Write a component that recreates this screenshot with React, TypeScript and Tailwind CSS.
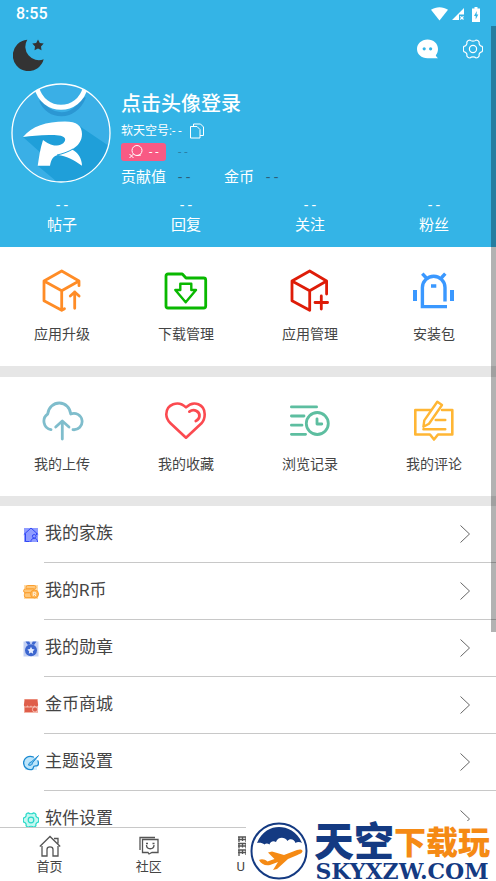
import React from 'react';

interface IconItem {
  label: string;
  icon: React.ReactNode;
}

const Outline: React.FC<{ className: string; children: React.ReactNode }> = ({ className, children }) => (
  <svg
    viewBox="0 0 44 44"
    className={`h-11 w-11 ${className}`}
    fill="none"
    stroke="currentColor"
    strokeWidth={2.8}
    strokeLinecap="round"
    strokeLinejoin="round"
    aria-hidden="true"
  >
    {children}
  </svg>
);

const SmallIcon: React.FC<{ children: React.ReactNode }> = ({ children }) => (
  <svg viewBox="0 0 16 16" className="h-4 w-4" fill="none" aria-hidden="true">
    {children}
  </svg>
);

const gearPath =
  'M7 1C8.200 2.600 11.800 2.600 13 1C14.200 1 15.500 1.800 16.200 3C15.600 5 17 7 19.200 7.400C19.800 9 19.800 11 19.200 12.600C17 13 15.600 15 16.200 17C15.500 18.200 14.200 19 13 19C11.800 17.400 8.200 17.400 7 19C5.800 19 4.500 18.200 3.800 17C4.400 15 3 13 .800 12.600C.200 11 .200 9 .800 7.400C3 7 4.400 5 3.800 3C4.500 1.800 5.800 1 7 1Z';

const tools: IconItem[] = [
  {
    label: '应用升级',
    icon: (
      <Outline className="text-[#ff8c26]">
        <path d="M39 16.7V12L21.7 2 4 12v19.7l17.7 9.6 2.8-1.6M4 12l17.7 9.7L39 12M21.7 21.7v19.6" />
        <path d="M34.7 39.3V23M30.3 27l4.4-4 4.4 4" />
      </Outline>
    ),
  },
  {
    label: '下载管理',
    icon: (
      <Outline className="text-[#09b800]">
        <path d="M4 5h14.3L22 9h17.7a2 2 0 0 1 2 2v26a2 2 0 0 1-2 2H4a2 2 0 0 1-2-2V7a2 2 0 0 1 2-2z" />
        <path d="M16.3 14.7h11V21H32L21.7 33.3 11.3 21h5z" strokeWidth={2.4} />
      </Outline>
    ),
  },
  {
    label: '应用管理',
    icon: (
      <Outline className="text-[#de1c08]">
        <path d="M38.6 25V12L21.7 2 4 12v19.7l17.7 9.6V21.7M4 12l17.7 9.7L38.6 12" />
        <path d="M33.3 27v13M27 33.5h12.6" />
      </Outline>
    ),
  },
  {
    label: '安装包',
    icon: (
      <Outline className="text-[#3a98ff]">
        <path
          d="M33 32.5V18.6a11.3 11.3 0 0 0-22.6 0v19H35M10.3 4.7l3.6 3.8M33.3 4.7l-3.6 3.8"
          strokeWidth={3.4}
          strokeLinecap="butt"
          strokeLinejoin="miter"
        />
        <path d="M1 21h4v11H1zM38 21h4v11h-4zM19 15.3h5.3v3.4H19z" fill="currentColor" stroke="none" />
      </Outline>
    ),
  },
];

const records: IconItem[] = [
  {
    label: '我的上传',
    icon: (
      <Outline className="text-[#7fbdcc]">
        <path d="M11 30.7A8.700 8.700 0 0 1 7.700 15C8.500 8.500 13.500 4 19.300 4C25.500 4 30.200 8.800 30.700 15A8.200 8.200 0 1 1 33 30.700" />
        <path d="M22.3 40V22.3M15.7 28l6.6-6 6.7 6" />
      </Outline>
    ),
  },
  {
    label: '我的收藏',
    icon: (
      <Outline className="text-[#fb4a50]">
        <path
          d="M22 8.400C14 .600 2.300 5.600 2.300 15.300c0 3.500 1.500 6.400 4.200 9L22 38.700l15.500-14.400c2.400-2.600 3.200-5.500 3.200-9C40.700 5.600 30 .600 22 8.400z"
          strokeWidth={2.6}
        />
        <path d="M25.400 12.600c4.800-3.400 10.800.2 10 5-.3 2-1.600 3.600-3.600 4.400" />
      </Outline>
    ),
  },
  {
    label: '浏览记录',
    icon: (
      <Outline className="text-[#5dbea0]">
        <path d="M3.4 7.9h25.2M3.4 17H16M3.4 26.2H14M3.4 35.3h14.2" />
        <circle cx="29.3" cy="24.5" r="11" />
        <path d="M29 19.8v5.2h4.8" />
      </Outline>
    ),
  },
  {
    label: '我的评论',
    icon: (
      <Outline className="text-[#ffb634]">
        <path d="M18.5 11H3.3v24.5H18l4 5 4-5h14.3V11H30" strokeWidth={2.6} />
        <path d="M11.4 27.8l.9-6.4L25.3 2.7 30 6 17 24.8zM23.7 21h9.6M11.4 30.2h21.9" strokeWidth={2.4} />
      </Outline>
    ),
  },
];

const menu: IconItem[] = [
  {
    label: '我的家族',
    icon: (
      <SmallIcon>
        <path d="M1 1h14v14H1z" fill="#8f9cff" />
        <path d="M.8 7.6L8 1l7.2 6.6M2.5 6.5v8h4M13.5 6v2" stroke="#2f46f5" />
        <circle cx="11.2" cy="9.3" r="1.8" stroke="#2f46f5" />
        <path d="M7.8 15c0-5 6.8-5 6.8 0" stroke="#2f46f5" />
      </SmallIcon>
    ),
  },
  {
    label: '我的R币',
    icon: (
      <SmallIcon>
        <path d="M1 1h14v14H1z" fill="#ffdca8" />
        <rect x="3" y="1.5" width="10" height="3.5" rx="1.7" fill="#ffc77a" stroke="#fb9f2f" />
        <rect x=".6" y="5" width="11" height="3.6" rx="1.7" fill="#ffc77a" stroke="#fb9f2f" />
        <rect x="1.4" y="8.8" width="10" height="4.8" rx="1.7" fill="#ffc77a" stroke="#fb9f2f" />
        <circle cx="11.5" cy="10" r="4" fill="#ffb757" stroke="#fb9f2f" />
        <path d="M10.3 12V8.3h1.5a1 1 0 0 1 0 2h-1M11.8 10.3l1 1.7" stroke="#fff" strokeWidth=".8" />
      </SmallIcon>
    ),
  },
  {
    label: '我的勋章',
    icon: (
      <SmallIcon>
        <path d="M.5.5h15v15H.5z" fill="#c3d0f3" />
        <path d="M2.5.5h3.8l1 2.5-2.4 1zM9.7.5h3.8L11 4 8.7 3z" fill="#3c66cf" />
        <circle cx="8" cy="9.3" r="6" fill="#3c66cf" />
        <path d="M8 5.8l1.1 2.3 2.5.3-1.8 1.8.4 2.5L8 11.5l-2.2 1.2.4-2.5-1.8-1.8 2.5-.3z" fill="#e6edff" />
      </SmallIcon>
    ),
  },
  {
    label: '金币商城',
    icon: (
      <SmallIcon>
        <path d="M1 1h14v14H1z" fill="#f4b6a8" />
        <path
          d="M2 1.5h12l1.2 5.5c-1 2-3 2-3.8.3-.8 1.700-2.800 1.700-3.400 0-.8 1.700-2.800 1.700-3.400 0C3.600 9 1.600 9 .8 7zM1.800 9.500h12.400V14H1.800z"
          fill="#df5e4a"
        />
        <circle cx="12" cy="11.500" r="2.600" fill="#df5e4a" stroke="#f9d3ca" strokeWidth=".8" />
      </SmallIcon>
    ),
  },
  {
    label: '主题设置',
    icon: (
      <SmallIcon>
        <path d="M2 3h12v12H2z" fill="#d5eefb" />
        <path
          d="M10.500 2C5-.2.500 3.500.600 8c.2 4.800 4.600 7.300 8.200 6.500 2-.5 1.200-2.600 2.200-3.300 1.500-1 3.600.6 4.200-1.400.4-1.500.2-2.800-.3-4"
          fill="#bde5fa"
          stroke="#1c8ad1"
          strokeWidth="1.300"
          strokeLinecap="round"
        />
        <path d="M15.500.600L8 7.200c-2-.2-1.500 2-2.700 2.800 2.500.8 4.300-.2 4-2z" fill="#8ed0f5" stroke="#1c8ad1" />
      </SmallIcon>
    ),
  },
  {
    label: '软件设置',
    icon: (
      <svg viewBox="0 0 20 20" className="h-4 w-4" fill="none" stroke="#27d9c8" strokeWidth={1.5} aria-hidden="true">
        <path d={gearPath} fill="#c4f8f1" strokeLinejoin="round" />
        <circle cx="10" cy="10" r="3.500" />
      </svg>
    ),
  },
];

const stats = ['帖子', '回复', '关注', '粉丝'];

const StatusBar: React.FC = () => (
  <div className="flex h-7 items-center justify-between pl-4 pr-4">
    <span className="text-base font-medium">8:55</span>
    <div className="flex items-center gap-1">
      <svg viewBox="0 0 17 14" className="h-3.5 w-[17px]" fill="currentColor" aria-hidden="true">
        <path d="M0 2.800C5-.6 12-.6 17 2.800L8.500 13.500z" />
      </svg>
      <svg viewBox="0 0 12 12" className="h-3 w-3" aria-hidden="true">
        <path d="M12 0v6.500H7V12H0z" fill="currentColor" />
        <path d="M8.300 8.300l3.200 3.200M11.500 8.300l-3.200 3.200" stroke="currentColor" strokeWidth="1.200" />
      </svg>
      <svg viewBox="0 0 8 15" className="ml-1 h-[15px] w-2" aria-hidden="true">
        <path d="M2.500 0h3v1.500H8V15H0V1.500h2.500z" fill="currentColor" />
        <path d="M4.800 4L2 9h1.700v3.500L6.300 7.500H4.600z" fill="#34b4e6" />
      </svg>
    </div>
  </div>
);

const Avatar: React.FC = () => (
  <svg viewBox="0 0 100 100" className="h-[100px] w-[100px]" aria-hidden="true">
    <defs>
      <clipPath id="avatar">
        <circle cx="50" cy="50" r="49" />
      </clipPath>
    </defs>
    <g clipPath="url(#avatar)">
      <path d="M0 0h100v100H0z" fill="#3aafe6" />
      <path d="M12 54L30 70 27 83l24 20h50V65L67 42z" fill="#1f9fd9" />
      <path d="M30 17C37 36 64 37 73 14" fill="none" stroke="#2b97d3" strokeWidth="4" />
      <path d="M25.500 4C32 31 68 31 74.500 4" fill="none" stroke="#fff" strokeWidth="5" />
      <path
        d="M12 54C21 43 35 38.500 54 38.500C66 38.500 71 43 71 51C71 58 67 63 61 66.500C67 69 71 76 71 82.700C63 77 55 73 47 72C42 73 40 77 39 82.700H26.700C28 75 29 66 32 57C36 60 41 63 46 62.500C51 62 55 59 54 55.500C52 52 45 52 38 52C28 52 20 53 12 54Z"
        fill="#fff"
      />
      <path d="M46 72C51 71 57 69 62 66" fill="none" stroke="#1f9fd9" strokeWidth="1" />
    </g>
    <circle cx="50" cy="50" r="49" fill="none" stroke="#fff" strokeWidth="1.300" />
  </svg>
);

const ProfileHeader: React.FC = () => (
  <header className="bg-[#34b4e6] text-white">
    <StatusBar />
    <div className="flex h-[55px] items-start justify-between pl-[13px] pr-[13px] pt-[11px]">
      <button aria-label="夜间模式">
        <svg viewBox="0 0 32 32" className="h-8 w-8" fill="#333" aria-hidden="true">
          <path d="M14.300.700A15.700 15.700 0 1 0 30.700 20.300A13.500 13.500 0 0 1 14.300.700Z" />
          <path d="M25 .500l1.800 3.400 3.900.7-2.700 2.800.5 3.900L25 9.600l-3.500 1.700.5-3.900-2.700-2.800 3.900-.7z" />
        </svg>
      </button>
      <div className="flex items-center gap-6">
        <button aria-label="消息">
          <svg viewBox="0 0 22 20" className="h-5 w-[22px]" aria-hidden="true">
            <path
              d="M10.500.5C16.500.5 21 4.600 21 10c0 2.500-.9 4.700-2.200 6.300.3 1.200 1 2 2.200 3H10.500C4.500 19.300 0 15.200 0 10S4.500.5 10.500.5z"
              fill="#fff"
            />
            <circle cx="7.200" cy="9.800" r="1.600" fill="#34b4e6" />
            <circle cx="13.600" cy="9.800" r="1.600" fill="#34b4e6" />
          </svg>
        </button>
        <button aria-label="设置">
          <svg viewBox="0 0 20 20" className="h-5 w-5" fill="none" stroke="#fff" strokeWidth={1.2} aria-hidden="true">
            <path d={gearPath} strokeLinejoin="round" />
            <circle cx="10" cy="10" r="3.600" />
          </svg>
        </button>
      </div>
    </div>

    <div className="flex items-start gap-2.5 pl-[11px]">
      <button aria-label="头像">
        <Avatar />
      </button>
      <div className="flex flex-col pt-[7px]">
        <h1 className="text-xl font-medium leading-7">点击头像登录</h1>
        <div className="flex h-[25px] items-center gap-2 text-xs">
          <span>软天空号:- -</span>
          <button aria-label="复制">
            <svg viewBox="0 0 14 16" className="h-4 w-3.5" fill="none" stroke="currentColor" aria-hidden="true">
              <path d="M.5 3.500h6.500L10 6.500V15H.5zM3.500 3.500V1h7l3 3v8.500H10" />
            </svg>
          </button>
        </div>
        <div className="flex h-[18px] items-center gap-3 text-xs">
          <span className="flex h-[18px] items-center gap-1.5 rounded-[3px] bg-[#f85a84] pl-2 pr-1">
            <svg viewBox="0 0 14 14" className="h-3.5 w-3.5" fill="none" stroke="currentColor" aria-hidden="true">
              <circle cx="8" cy="5.500" r="5" />
              <path d="M4.500 9L.5 13M.5 9l4 4M8 10.500l4-.5" />
            </svg>
            <span className="w-[13px]">- -</span>
          </span>
          <span className="text-[#2b7fa6]">- -</span>
        </div>
        <div className="flex h-8 items-center gap-3 text-[15px]">
          <span>贡献值</span>
          <span className="w-[34px] text-[#2d5f78]">- -</span>
          <span>金币</span>
          <span className="text-[#2d5f78]">- -</span>
        </div>
      </div>
    </div>

    <div className="grid grid-cols-4 pb-3 text-center text-[15px]">
      {stats.map((label) => (
        <button key={label} className="flex flex-col items-center pt-0.5">
          <span className="leading-5">- -</span>
          <span className="leading-5">{label}</span>
        </button>
      ))}
    </div>
  </header>
);

const IconGrid: React.FC<{ items: IconItem[] }> = ({ items }) => (
  <section className="grid h-[119px] grid-cols-4 bg-white pt-[22px]">
    {items.map((item) => (
      <button key={item.label} className="flex flex-col items-center gap-[11px] self-start">
        {item.icon}
        <span className="text-sm leading-5">{item.label}</span>
      </button>
    ))}
  </section>
);

const MenuRow: React.FC<{ item: IconItem }> = ({ item }) => (
  <li>
    <button className="flex h-[57px] w-full items-center text-left">
      <span className="w-11 shrink-0 pl-[23px]">{item.icon}</span>
      <span className="flex h-full flex-1 items-center justify-between border-b border-[#c8c8c8] pl-px pr-[26px] text-[17px]">
        {item.label}
        <svg viewBox="0 0 10 18" className="h-[18px] w-2.5" fill="none" stroke="#666" aria-hidden="true">
          <path d="M.5.500L9.500 9 .5 17.500" />
        </svg>
      </span>
    </button>
  </li>
);

const SiteLogo: React.FC = () => (
  <div className="absolute bottom-0 right-0 flex h-[60px] w-[250px] items-center bg-white pl-1">
    <svg viewBox="0 0 58 58" className="h-[58px] w-[58px] shrink-0" aria-hidden="true">
      <circle cx="29" cy="29" r="27.500" fill="#fff" stroke="#143a82" strokeWidth="2" />
      <path
        d="M7 21C12 9 21 5 29 5s18 4 23 16c-2-1.500-5-1.500-6.500 0-1-4-6-5-8-2-3-5-10-4-11.500 1-3-2-6 0-6.500 2.500-2-1.500-4-1-5 0-2-2-5.500-2-7.500-1.500z"
        fill="#143a82"
      />
      <path
        d="M9 38c3-1.500 6-.5 8.500 1.500l7-2.500-6.500-6.500 4-1 12 3.500 13-5c3-1 5.500-.5 5.500 1 0 2-3 3-5 4L38 37 27 47l-4 1 5-8-8 3c-5 1-9-1-11-5z"
        fill="#f58a14"
      />
    </svg>
    <div className="flex flex-1 flex-col items-center">
      <div className="flex h-10 items-center whitespace-nowrap pt-1 font-black">
        <span className="text-[40px] leading-9 text-[#143a82]">天空</span>
        <span className="text-[32px] leading-8 text-[#f58a14]">下载玩</span>
      </div>
      <span className="font-['DejaVu_Serif',serif] text-[22px] font-bold leading-5 text-[#143a82]">SKYXZW.COM</span>
    </div>
  </div>
);

const BottomNav: React.FC = () => (
  <nav className="relative shrink-0 border-t border-[#c8c8c8] bg-white">
    <div className="grid h-[53px] grid-cols-5 text-[13px] leading-[18px]">
      <button className="flex flex-col items-center gap-px pt-[7px]">
        <svg viewBox="0 0 22 22" className="h-[22px] w-[22px]" fill="none" stroke="#555" strokeWidth={1.3} aria-hidden="true">
          <path d="M.8 11.500L11 1.500l10.200 10M15 3.500h4v5M3 11v10h5v-6.500c0-3.500 6-3.500 6 0V21h5V11" />
        </svg>
        首页
      </button>
      <button className="flex flex-col items-center gap-px pt-[7px]">
        <svg viewBox="0 0 22 22" className="h-[22px] w-[22px]" fill="none" stroke="#555" strokeWidth={1.3} aria-hidden="true">
          <path d="M2 15V2.500H17M4.500 4.500H20v13h-6L11 19l-1-1.500H4.500zM8 8.500h2M14.500 8.500h2M8.500 10c0 5 7.500 5 7.500 0" />
        </svg>
        社区
      </button>
      <button className="flex flex-col items-center gap-px pt-[7px]">
        <svg viewBox="0 0 22 22" className="h-[22px] w-[22px]" fill="none" stroke="#555" strokeWidth={1.3} aria-hidden="true">
          <path d="M1 2h20M1 8.500h20M1 15h20M1 4.500h8M1 11h8M1 17.500h8M2 2v5M5.500 2v4M9 2v5M2 8.500v5M5.500 8.500v4M9 8.500v5M2 15v6M5.500 15v4M9 15v5" />
        </svg>
        <span className="w-[23px] text-left">U</span>
      </button>
    </div>
    <SiteLogo />
  </nav>
);

export default function App() {
  return (
    <div className="relative flex h-screen flex-col overflow-hidden bg-white font-[Roboto,'Noto_Sans_CJK_SC',sans-serif] text-[#444]">
      <main className="min-h-0 flex-1 overflow-hidden">
        <ProfileHeader />
        <IconGrid items={tools} />
        <div className="h-[11px] bg-[#e6e6e6]" />
        <IconGrid items={records} />
        <div className="h-2.5 bg-[#e6e6e6]" />
        <ul>
          {menu.map((item) => (
            <MenuRow key={item.label} item={item} />
          ))}
        </ul>
      </main>
      <BottomNav />
      <div className="absolute right-0 top-[26px] h-[606px] w-[5px] bg-black/30" />
    </div>
  );
}
